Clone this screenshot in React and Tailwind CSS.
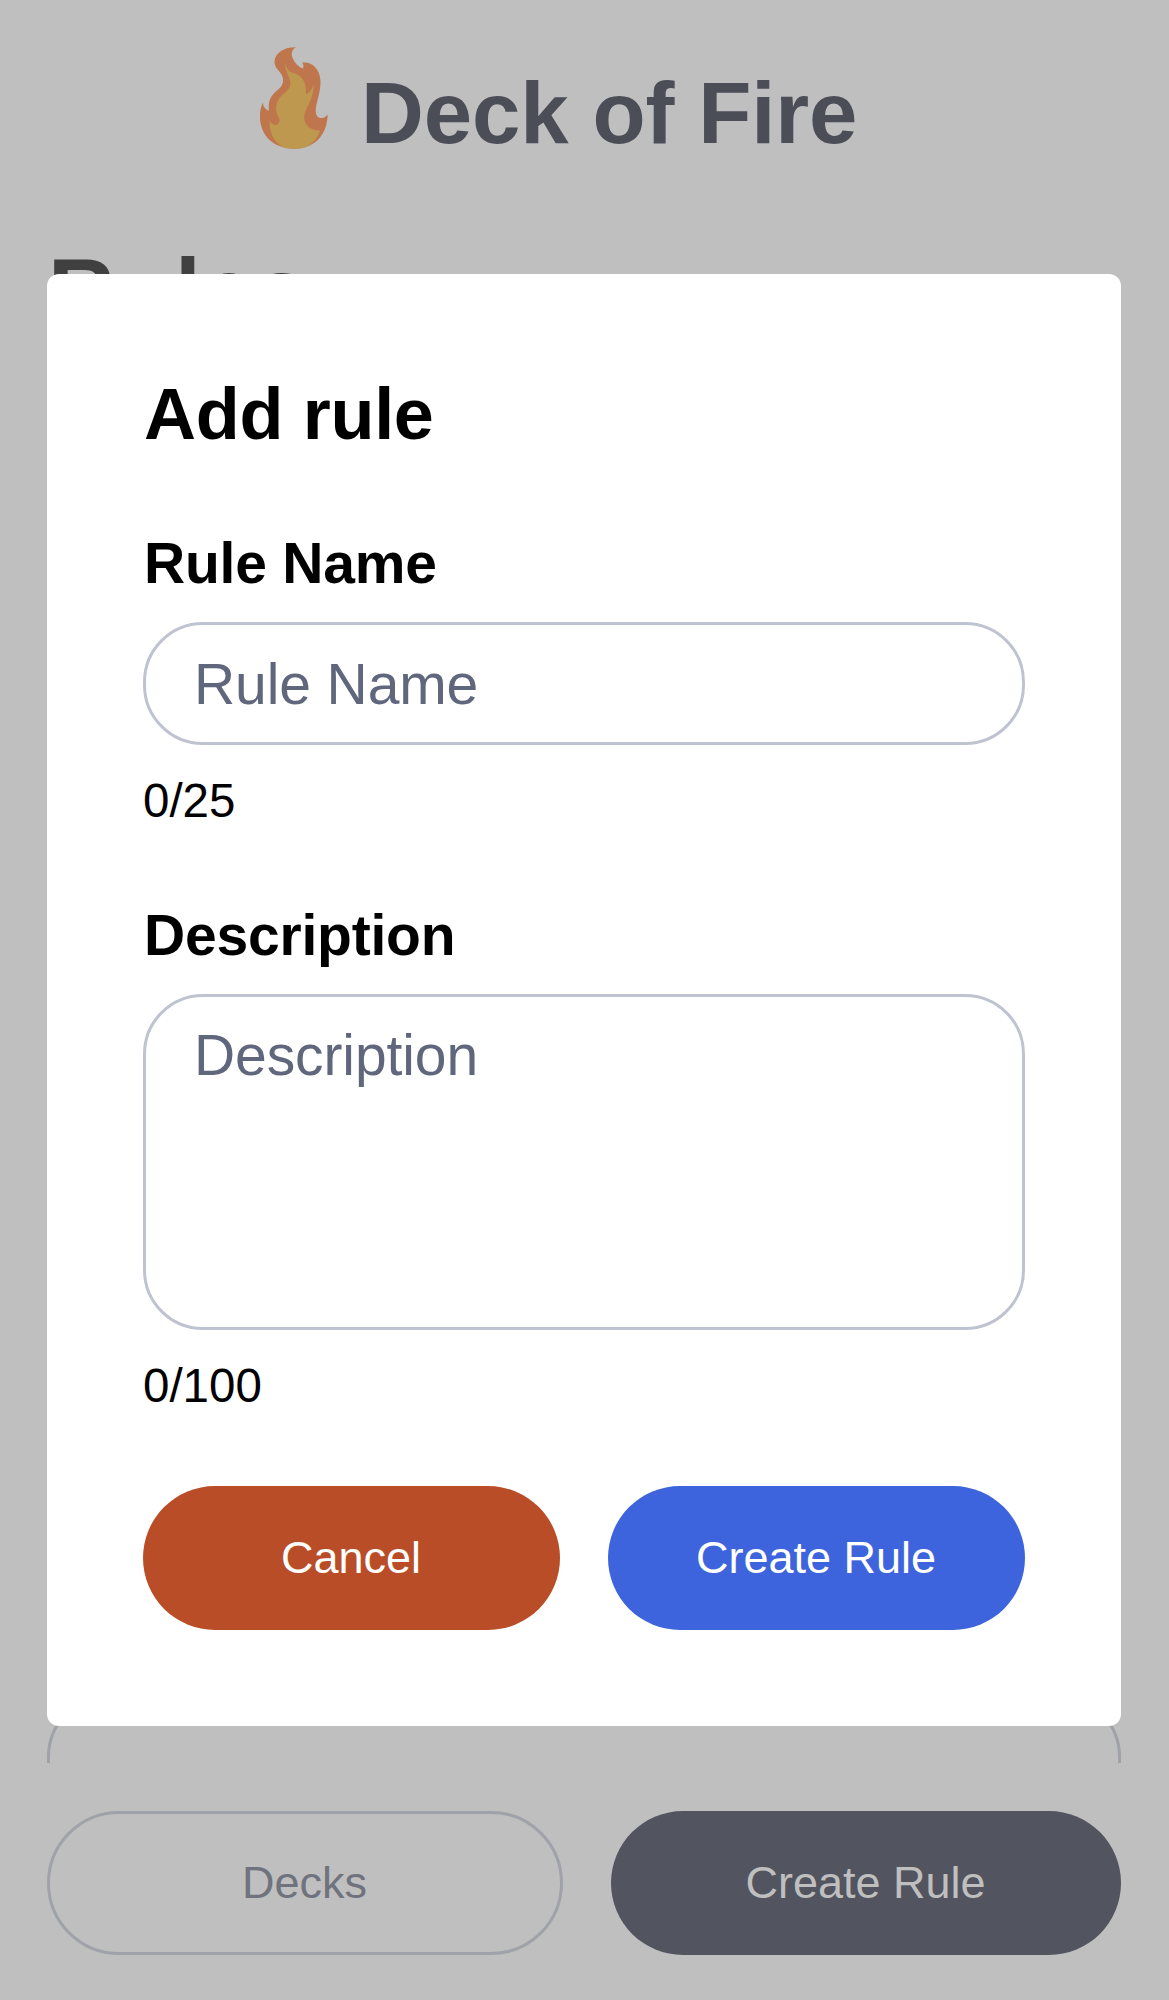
function Flame() {
  return (
    <svg viewBox="59 50 206 307" className="h-[102px] w-[68px] shrink-0" preserveAspectRatio="none" aria-hidden="true">
      <path
        fill="#c0764c"
        d="M168 51C130 50 102 70 103 97C104 120 129 125 129 150C129 185 80 180 86 242C76 238 68 230 68 217C52 248 58 290 75 315C95 345 130 356 163 356C220 356 262 320 264 253C255 265 240 268 232 258C218 235 245 195 242 150C240 115 215 92 186 97C191 102 192 108 189 115C170 108 155 85 155 72C155 62 160 56 168 51Z"
      />
      <path
        fill="#bf984f"
        d="M136 95C132 125 152 140 151 160C150 190 108 190 108 238C108 255 122 265 117 276C112 290 95 285 88 272C86 310 105 345 138 355Q163 358 190 354C215 345 232 328 241 302C215 302 190 285 193 258C197 230 220 215 222 163C217 175 210 188 198 192C200 160 190 140 165 130C148 127 138 115 136 95Z"
      />
    </svg>
  );
}

function Modal() {
  return (
    <div className="absolute top-[274px] left-[47px] w-[1074px] rounded-xl bg-white p-24 text-black">
      <h2 className="pl-px text-[72px] leading-[88px] font-bold tracking-[-0.3px]">Add rule</h2>

      <label htmlFor="name" className="mt-[73px] block pl-px text-[57px] leading-[64px] font-bold tracking-[-0.2px]">
        Rule Name
      </label>
      <input
        id="name"
        placeholder="Rule Name"
        className="mt-[27px] block h-[123px] w-full rounded-[60px] border-3 border-[#bfc3d0] px-12 text-[57px] tracking-[-0.1px] placeholder:text-[#60677c]"
      />
      <p className="mt-7 text-[47.5px] leading-[56px]">0/25</p>

      <label htmlFor="description" className="mt-[74px] block pl-px text-[57px] leading-[64px] font-bold tracking-[-0.2px]">
        Description
      </label>
      <textarea
        id="description"
        placeholder="Description"
        className="mt-[27px] block h-[336px] w-full resize-none rounded-[60px] border-3 border-[#bfc3d0] px-12 pt-[26px] text-[57px] leading-[64px] tracking-[-0.1px] placeholder:text-[#60677c]"
      />
      <p className="mt-7 text-[47.5px] leading-[56px]">0/100</p>

      <div className="mt-[72px] grid grid-cols-2 gap-12 text-[45px] text-white">
        <button className="h-36 rounded-full bg-[#b94d27] pr-px">Cancel</button>
        <button className="h-36 rounded-full bg-[#3d64dd] pr-px">Create Rule</button>
      </div>
    </div>
  );
}

export default function App() {
  return (
    <div className="relative flex h-[2000px] w-[1169px] flex-col overflow-hidden bg-[#bfbfbf] px-[47px] font-['Liberation_Sans',Arial,sans-serif]">
      <header className="flex h-[196px] pt-[47px] pl-[213px]">
        <Flame />
        <h1 className="mt-[18px] ml-[33px] text-[87px] leading-[96px] font-bold tracking-[-0.15px] whitespace-nowrap text-[#4b4d57]">
          Deck of Fire
        </h1>
      </header>

      <main className="flex h-[1567px] w-[1074px] shrink-0 flex-col justify-between overflow-hidden">
        <h2 className="mt-[47px] pl-px text-[93px] leading-[96px] font-bold tracking-[1.5px] text-[#404040]">Rules</h2>
        <div className="h-[67px] shrink-0 rounded-t-[60px] border-3 border-b-0 border-[#a0a2aa]" />
      </main>

      <footer className="mt-12 flex gap-12 text-[45px]">
        <button className="h-36 w-[516px] rounded-full border-3 border-[#a0a2aa] pr-px text-[#70737d]">Decks</button>
        <button className="h-36 w-[510px] rounded-full bg-[#52545f] pr-px text-[#bfbfbf]">Create Rule</button>
      </footer>

      <Modal />
    </div>
  );
}
